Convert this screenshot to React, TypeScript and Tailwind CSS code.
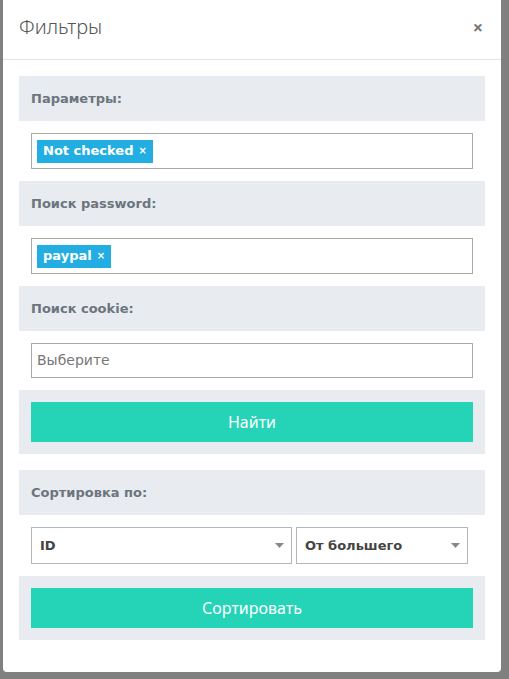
import React from "react";

const font = { fontFamily: '"Noto Sans", "Open Sans", sans-serif' };
const wide = { fontFamily: '"DejaVu Sans", "Noto Sans", sans-serif' };

const Label = ({ text }: { text: string }) => (
  <div className="bg-[#e8ebf0] h-[45px] flex items-center px-3">
    <span className="text-[13px] font-bold text-[#6c757d]" style={wide}>
      {text}
    </span>
  </div>
);

const Tag = ({ text }: { text: string }) => (
  <span
    className="inline-flex items-center h-[23px] px-[6px] bg-[#23aee3] text-white text-[13px] font-bold"
    style={wide}
  >
    {text}
    <span className="ml-[5px] text-[10px] leading-none">×</span>
  </span>
);

const TagInput = ({ text }: { text: string }) => (
  <div className="p-3">
    <div className="h-[36px] border border-[#aaa] flex items-center px-[5px]">
      <Tag text={text} />
    </div>
  </div>
);

const Arrow = () => (
  <svg width="9" height="5" viewBox="0 0 9 5" className="text-[#888]">
    <path d="M0 0h9L4.5 5z" fill="currentColor" />
  </svg>
);

const Select = ({ text, className }: { text: string; className: string }) => (
  <div
    className={
      "h-[37px] border border-[#b4b8bc] flex items-center justify-between pl-[8px] pr-[7px] " +
      className
    }
  >
    <span className="text-[13px] font-bold text-[#444]" style={wide}>
      {text}
    </span>
    <Arrow />
  </div>
);

const App = () => {
  return (
    <div className="bg-[#808080] min-h-[679px] w-full" style={font}>
      <div className="ml-[3px] w-[498px] h-[672px] bg-white rounded-b-[4px] flex flex-col">
        {/* шапка */}
        <div className="h-[60px] border-b border-[#e5e5e5] flex items-center justify-between pl-4 pr-[18px] pb-[5px]">
          <h4 className="text-[20px] font-light text-[#555]">Фильтры</h4>
          <span className="text-[18px] font-bold text-[#777] leading-none">×</span>
        </div>
        <div className="px-4 pt-4">
          <Label text="Параметры:" />
          <TagInput text="Not checked" />
          <Label text="Поиск password:" />
          <TagInput text="paypal" />
          <Label text="Поиск cookie:" />
          <div className="p-3">
            <div className="h-[35px] border border-[#aaa] flex items-center px-[5px]">
              <span className="text-[14px] text-[#777]" style={wide}>
                Выберите
              </span>
            </div>
          </div>
          <div className="bg-[#e8ebf0] p-3">
            <button className="w-full h-[40px] bg-[#25d4b7] text-white text-[16px]">
              Найти
            </button>
          </div>
          <div className="mt-4">
            <Label text="Сортировка по:" />
          </div>
          <div className="p-3 flex gap-[4px]">
            <Select text="ID" className="w-[261px]" />
            <Select text="От большего" className="w-[172px]" />
          </div>
          <div className="bg-[#e8ebf0] p-3">
            <button className="w-full h-[40px] bg-[#25d4b7] text-white text-[16px]">
              Сортировать
            </button>
          </div>
        </div>
      </div>
    </div>
  );
};

export default App;
